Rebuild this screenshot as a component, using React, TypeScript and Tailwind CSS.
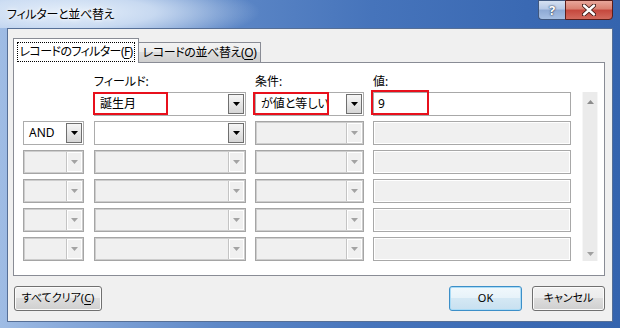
import React from "react";

const font =
  "font-['Noto_Sans','Noto_Sans_CJK_JP',sans-serif] [font-feature-settings:'palt']";

function Arrow({ color, up }: { color: string; up?: boolean }) {
  return (
    <svg width="7" height="4" viewBox="0 0 7 4">
      <path d={up ? "M0 4h7L3.5 0z" : "M0 0h7L3.5 4z"} fill={color} />
    </svg>
  );
}

function Combo({
  text,
  disabled,
  className,
}: {
  text?: string;
  disabled?: boolean;
  className: string;
}) {
  if (disabled) {
    return (
      <div
        className={`flex h-6 border border-[#a5a5a5] bg-[#f0f0f0] p-px shadow-[inset_0_0_0_1px_#cdcdcd] ${className}`}
      >
        <div className="flex-1" />
        <div className="flex w-[16px] items-center justify-center border-l border-[#c4c4c4] bg-[#f0f0f0] shadow-[inset_1px_1px_0_#fff,inset_-1px_-1px_0_#fff]">
          <Arrow color="#a3a3a3" />
        </div>
      </div>
    );
  }
  return (
    <div className={`flex h-6 border border-[#acacac] bg-white p-px ${className}`}>
      <div className="flex-1 truncate pl-[4px] text-[12px] leading-[20px] text-black">
        {text}
      </div>
      <div className="flex w-[16px] items-center justify-center border border-[#6f6f6f] bg-[linear-gradient(#f6f6f6,#e6e6e6_50%,#d6d6d6)]">
        <Arrow color="#000" />
      </div>
    </div>
  );
}

function TextBox({ text, disabled }: { text?: string; disabled?: boolean }) {
  if (disabled) {
    return (
      <div className="h-6 w-[198px] border border-[#a8a8a8] bg-[#f0f0f0] shadow-[inset_0_0_0_1px_#fff]" />
    );
  }
  return (
    <div className="h-6 w-[198px] border border-[#a8a8a8] bg-white pl-[4px] text-[12px] leading-[22px] text-black">
      {text}
    </div>
  );
}

function Red({ className }: { className: string }) {
  return (
    <div
      className={`pointer-events-none absolute border-2 border-[#e8101c] ${className}`}
    />
  );
}

function WinButton({
  children,
  className,
  isDefault,
}: {
  children: React.ReactNode;
  className: string;
  isDefault?: boolean;
}) {
  return (
    <div
      className={`flex h-[25px] items-center justify-center whitespace-nowrap rounded-[3px] border text-[11px] text-black ${
        isDefault
          ? "border-[#3c8fc8] bg-[linear-gradient(#f1f8fc_0%,#e6f2f9_50%,#d4e8f4_50%,#c8e0f0_100%)] shadow-[inset_0_0_0_1px_#a9dbf6]"
          : "border-[#707070] bg-[linear-gradient(#f2f2f2_0%,#ebebeb_50%,#dddddd_50%,#cfcfcf_100%)] shadow-[inset_0_0_0_1px_#fbfbfb]"
      } ${className}`}
    >
      {children}
    </div>
  );
}

export default function App() {
  const rows = [0, 1, 2, 3, 4, 5];
  return (
    <div
      className={`flex h-[328px] w-[620px] flex-col overflow-hidden bg-[linear-gradient(90deg,#9fbce4_0%,#86a8da_12%,#5e88c7_35%,#4674bb_60%,#3a69b3_85%,#3564ae_100%)] ${font}`}
    >
      {/* title bar */}
      <div className="flex h-[28px] shrink-0 bg-[radial-gradient(ellipse_190px_34px_at_70px_12px,rgba(232,241,251,0.97)_0%,rgba(214,228,246,0.85)_45%,rgba(200,218,242,0)_100%)]">
        <div className="flex-1 whitespace-nowrap pl-[7px] pt-[6px] text-[12px] leading-[18px] tracking-[-0.3px] text-black [text-shadow:0_0_6px_#fff,0_0_3px_#fff]">
          フィルターと並べ替え
        </div>
        <div className="mr-[7px] flex h-[20px]">
          <div className="flex w-[27px] items-center justify-center rounded-bl-[4px] border border-r-0 border-[#40577d] bg-[linear-gradient(#d5e1f2,#b6c9e6_45%,#8ea9d4_50%,#a6bfe3)] text-[13px] font-bold leading-none text-white [text-shadow:0_0_2px_#233552,0_0_1px_#233552]">
            ?
          </div>
          <div className="flex w-[48px] items-center justify-center rounded-br-[4px] border border-[#5b1e1a] bg-[linear-gradient(#e8a69a,#d98070_45%,#c5473d_50%,#d26a5d)]">
            <svg width="14" height="12" viewBox="0 0 14 12">
              <path
                d="M2 1.5L12 10.5M12 1.5L2 10.5"
                stroke="#3a1512"
                strokeWidth="4.2"
                strokeLinecap="round"
              />
              <path
                d="M2 1.5L12 10.5M12 1.5L2 10.5"
                stroke="#fff"
                strokeWidth="2.4"
                strokeLinecap="round"
              />
            </svg>
          </div>
        </div>
      </div>

      {/* client area */}
      <div className="mx-[7px] mb-[6px] flex flex-1 flex-col border border-[#566f96] bg-[#f0f0f0] pl-[5px] pr-[7px] pt-[9px]">
        {/* tabs */}
        <div className="flex h-[24px] items-end">
          <div className="relative z-10 -mb-px h-[25px] w-[126px] border border-b-0 border-[#898c95] bg-white">
            <div className="ml-[3px] mt-[3px] flex h-[20px] w-[118px] items-center justify-center whitespace-nowrap border border-dotted border-black text-[12px] tracking-[-0.6px] text-black">
              レコードのフィルター(<span className="underline underline-offset-2">F</span>)
            </div>
          </div>
          <div className="flex h-[20px] w-[122px] items-center justify-center whitespace-nowrap border border-b-0 border-l-0 border-[#898c95] bg-[linear-gradient(#f3f3f3,#ebebeb_50%,#dddddd_50%,#cfcfcf)] text-[12px] tracking-[-0.4px] text-black">
            レコードの並べ替え(<span className="underline underline-offset-2">O</span>)
          </div>
        </div>

        {/* panel */}
        <div className="flex h-[214px] border border-[#898c95] bg-white pl-[9px]">
          <div className="flex flex-col">
            <div className="mb-[2px] mt-[11px] flex h-[16px] text-[12px] leading-[16px] text-black">
              <div className="w-[61px]" />
              <div className="ml-[10px] w-[152px]">フィールド:</div>
              <div className="ml-[9px] w-[109px]">条件:</div>
              <div className="ml-[9px] w-[198px]">値:</div>
            </div>
            <div className="flex flex-col gap-[5px]">
              {rows.map((i) => (
                <div key={i} className="flex">
                  {i === 0 ? (
                    <div className="w-[61px]" />
                  ) : i === 1 ? (
                    <Combo className="w-[61px]" text="AND" />
                  ) : (
                    <Combo className="w-[61px]" disabled />
                  )}
                  <div className="relative ml-[10px]">
                    {i < 2 ? (
                      <Combo className="w-[152px]" text={i === 0 ? "誕生月" : ""} />
                    ) : (
                      <Combo className="w-[152px]" disabled />
                    )}
                    {i === 0 && <Red className="left-[-1px] top-0 h-[23px] w-[75px]" />}
                  </div>
                  <div className="relative ml-[9px]">
                    {i === 0 ? (
                      <Combo className="w-[109px]" text="が値と等しい" />
                    ) : (
                      <Combo className="w-[109px]" disabled />
                    )}
                    {i === 0 && <Red className="left-[-2px] top-0 h-[23px] w-[76px]" />}
                  </div>
                  <div className="relative ml-[9px]">
                    {i === 0 ? <TextBox text="9" /> : <TextBox disabled />}
                    {i === 0 && (
                      <Red className="left-[-2px] top-[-2px] h-[25px] w-[58px]" />
                    )}
                  </div>
                </div>
              ))}
            </div>
          </div>
          <div className="ml-[11px] mt-[29px] flex h-[169px] w-[16px] flex-col items-center justify-between border-x border-[#f6f6f6] bg-[#ebebeb] pb-[5px] pt-[8px]">
            <Arrow color="#8c8c8c" up />
            <Arrow color="#a0a0a0" />
          </div>
        </div>

        {/* buttons */}
        <div className="mt-[10px] flex justify-between">
          <WinButton className="ml-px w-[88px]">
            すべてクリア(<span className="underline underline-offset-2">C</span>)
          </WinButton>
          <div className="flex gap-[10px]">
            <WinButton className="w-[73px]" isDefault>
              OK
            </WinButton>
            <WinButton className="w-[73px]">キャンセル</WinButton>
          </div>
        </div>
      </div>
    </div>
  );
}
